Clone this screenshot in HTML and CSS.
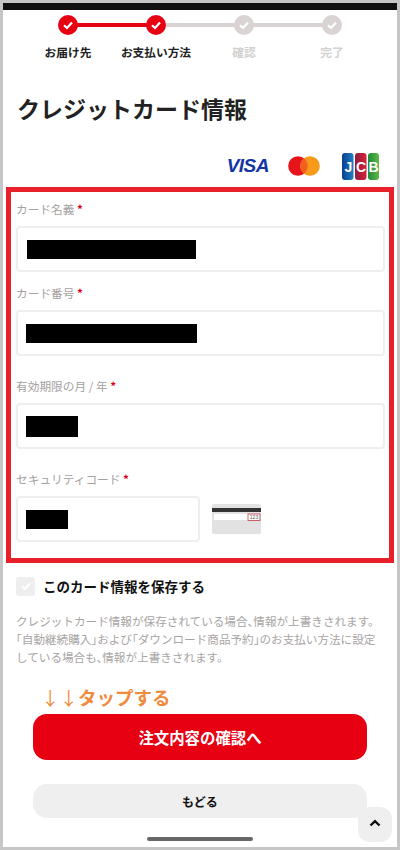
FILE: index.html
```html
<!DOCTYPE html>
<html lang="ja">
<head>
<meta charset="utf-8">
<title>クレジットカード情報</title>
<link rel="stylesheet" href="styles.css">
</head>
<body>
<div class="frame">
  <div class="topbar"></div>
  <ol class="stepper">
    <li class="step done"><span class="dot"><svg viewBox="0 0 12 12" width="12" height="12"><path d="M2 6.2 5 9 10 3.4" fill="none" stroke="#fff" stroke-width="2.2"/></svg></span><span class="step-label">お届け先</span></li>
    <li class="step done"><span class="dot"><svg viewBox="0 0 12 12" width="12" height="12"><path d="M2 6.2 5 9 10 3.4" fill="none" stroke="#fff" stroke-width="2.2"/></svg></span><span class="step-label">お支払い方法</span></li>
    <li class="step"><span class="dot"><svg viewBox="0 0 12 12" width="12" height="12"><path d="M2 6.2 5 9 10 3.4" fill="none" stroke="#fff" stroke-width="2.2"/></svg></span><span class="step-label">確認</span></li>
    <li class="step"><span class="dot"><svg viewBox="0 0 12 12" width="12" height="12"><path d="M2 6.2 5 9 10 3.4" fill="none" stroke="#fff" stroke-width="2.2"/></svg></span><span class="step-label">完了</span></li>
  </ol>
  <h1 class="title">クレジットカード情報</h1>
  <div class="brands">
    <span class="visa">VISA</span>
    <svg class="mc" viewBox="0 0 32 20" width="32" height="20"><circle cx="10" cy="10" r="9.8" fill="#e8141c"/><circle cx="22" cy="10" r="9.8" fill="#f79a1a"/><path d="M16 2.3a9.8 9.8 0 0 1 0 15.4 9.8 9.8 0 0 1 0-15.4z" fill="#f2601f"/></svg>
    <svg class="jcb" viewBox="0 0 37 27" width="37" height="27">
      <defs>
        <linearGradient id="jb" x1="0" x2="1" y1="0" y2="0"><stop offset="0" stop-color="#0a3f8f"/><stop offset="1" stop-color="#1f7fc4"/></linearGradient>
        <linearGradient id="jr" x1="0" x2="1" y1="0" y2="0"><stop offset="0" stop-color="#8f1c3c"/><stop offset="1" stop-color="#d8203c"/></linearGradient>
        <linearGradient id="jg" x1="0" x2="1" y1="0" y2="0"><stop offset="0" stop-color="#1c8a3c"/><stop offset="1" stop-color="#62b846"/></linearGradient>
      </defs>
      <rect x="0" y="0" width="11.5" height="27" rx="3" fill="url(#jb)"/>
      <rect x="13" y="0" width="11.5" height="27" rx="3" fill="url(#jr)"/>
      <rect x="26" y="0" width="11" height="27" rx="3" fill="url(#jg)"/>
      <text x="2.5 14 26.5" y="19" class="jcb-text">JCB</text>
    </svg>
  </div>
  <form class="card-form">
    <div class="field">
      <label class="field-label">カード名義 <em>*</em></label>
      <div class="input"><span class="mask mask-name"></span></div>
    </div>
    <div class="field">
      <label class="field-label">カード番号 <em>*</em></label>
      <div class="input"><span class="mask mask-number"></span></div>
    </div>
    <div class="field field-wide">
      <label class="field-label">有効期限の月 / 年 <em>*</em></label>
      <div class="input"><span class="mask mask-date"></span></div>
    </div>
    <div class="field field-wide">
      <label class="field-label">セキュリティコード <em>*</em></label>
      <div class="cvv-row">
        <div class="input input-cvv"><span class="mask mask-cvv"></span></div>
        <svg class="cvv-card" viewBox="0 0 49 30" width="49" height="30">
          <rect width="49" height="30" rx="2" fill="#e2e2e2"/>
          <rect y="4" width="49" height="4" fill="#333"/>
          <rect x="2" y="10" width="35" height="6" fill="#fff"/>
          <rect x="36" y="10" width="12" height="6.5" fill="#fff" stroke="#c2384a" stroke-width="0.8"/>
          <text x="42" y="15.4" text-anchor="middle" class="cvv-text">123</text>
        </svg>
      </div>
    </div>
  </form>
  <div class="save">
    <span class="checkbox"><svg viewBox="0 0 12 12" width="12" height="12"><path d="M2 6.2 5 9 10 3.4" fill="none" stroke="#fff" stroke-width="2"/></svg></span>
    <span class="save-label">このカード情報を保存する</span>
  </div>
  <p class="note">クレジットカード情報が保存されている場合、情報が上書きされます。<br>「自動継続購入」および「ダウンロード商品予約」のお支払い方法に設定している場合も、情報が上書きされます。</p>
  <div class="tap-hint"><span class="arrows">↓↓</span>タップする</div>
  <button class="btn btn-primary" type="button">注文内容の確認へ</button>
  <button class="btn btn-back" type="button">もどる</button>
  <button class="to-top" type="button" aria-label="ページ上部へ"><svg viewBox="0 0 12 8" width="12" height="8"><path d="M1.5 6.5 6 2.2 10.5 6.5" fill="none" stroke="#111" stroke-width="2.4"/></svg></button>
  <div class="home-bar"></div>
</div>
</body>
</html>
```
FILE: styles.css
```css
* { box-sizing: border-box; }
html, body { margin: 0; padding: 0; }
body {
  width: 400px;
  height: 850px;
  overflow: hidden;
  background: #fff;
  color: #222;
  font-family: "Noto Sans CJK JP", "Noto Sans", sans-serif;
}
.frame {
  position: relative;
  width: 400px;
  height: 850px;
  border: 3px solid #c6c6c6;
  background: #fff;
  overflow: hidden;
}
.topbar { height: 7px; background: #111; }

.stepper {
  list-style: none;
  margin: 0;
  padding: 5px 0 0 21px;
  display: flex;
}
.step {
  position: relative;
  width: 88px;
  display: flex;
  flex-direction: column;
  align-items: center;
  color: #d3d0d0;
}
.step.done { color: #222; }
.step::after {
  content: "";
  position: absolute;
  top: 8px;
  left: 44px;
  width: 88px;
  height: 4px;
  background: #d9d3d3;
}
.step:first-child::after { background: #e60012; }
.step:last-child::after { display: none; }
.dot {
  position: relative;
  z-index: 1;
  width: 20px;
  height: 20px;
  border-radius: 50%;
  background: #d9d3d3;
  display: flex;
  align-items: center;
  justify-content: center;
}
.step.done .dot { background: #e60012; }
.step-label {
  margin-top: 8px;
  font-size: 11.7px;
  line-height: 18px;
  font-weight: 700;
  white-space: nowrap;
}

.title {
  margin: 29px 0 0 14px;
  font-size: 23px;
  line-height: 36px;
  font-weight: 700;
  color: #222;
}
.brands {
  margin-top: 26px;
  padding-right: 18px;
  height: 28px;
  display: flex;
  align-items: center;
  justify-content: flex-end;
}
.visa {
  font-family: "Liberation Sans", sans-serif;
  font-size: 19px;
  font-weight: 700;
  font-style: italic;
  color: #1434a4;
  letter-spacing: -0.5px;
  margin-right: 19px;
}
.mc { margin-right: 22px; }
.jcb-text {
  font-family: "Liberation Sans", sans-serif;
  font-size: 14px;
  font-weight: 700;
  fill: #fff;
}

.card-form {
  margin: 7px 3px 0;
  height: 376px;
  border: 5px solid #e8202a;
  padding: 0 5px;
}
.field { margin-top: 8px; }
.field + .field { margin-top: 12px; }
.field-wide + .field-wide, .field + .field-wide { margin-top: 21px; }
.field-label {
  display: block;
  font-size: 11.7px;
  line-height: 18px;
  color: #a5a1a1;
}
.field-label em {
  font-style: normal;
  font-weight: 700;
  color: #e60012;
}
.input {
  margin-top: 8px;
  height: 46px;
  width: 369px;
  border: 2px solid #eeeeee;
  border-radius: 4px;
  background: #fff;
  display: flex;
  align-items: center;
  padding-left: 9px;
}
.mask { display: block; height: 19px; background: #000; }
.mask-name { width: 169px; }
.mask-number { width: 171px; margin-left: -1px; }
.mask-date { width: 52px; height: 21px; margin-left: -1px; }
.mask-cvv { width: 42px; margin-left: -1px; }
.cvv-row {
  display: flex;
  align-items: center;
  gap: 12px;
  margin-top: 8px;
}
.input-cvv { width: 184px; margin-top: 0; }
.cvv-text {
  font-family: "Liberation Sans", sans-serif;
  font-size: 5px;
  fill: #555;
}

.save {
  margin: 13px 0 0 13px;
  display: flex;
  align-items: center;
  gap: 8px;
}
.checkbox {
  width: 19px;
  height: 19px;
  border-radius: 3px;
  background: #eeeeee;
  display: flex;
  align-items: center;
  justify-content: center;
}
.save-label {
  font-size: 13.5px;
  line-height: 20px;
  font-weight: 700;
  color: #111;
}
.note {
  margin: 16px 0 0 13px;
  width: 368px;
  font-size: 11.6px;
  line-height: 18px;
  color: #a8a4a4;
  font-feature-settings: "halt";
}
.tap-hint {
  margin: 18px 0 0 38px;
  font-size: 18.5px;
  line-height: 26px;
  font-weight: 700;
  color: #f08a3c;
}
.arrows { font-weight: 400; }
.btn {
  display: block;
  width: 334px;
  margin-left: 30px;
  border: 0;
  font-family: inherit;
  font-weight: 700;
  text-align: center;
}
.btn-primary {
  margin-top: 4px;
  height: 46px;
  border-radius: 14px;
  background: #e60012;
  color: #fff;
  font-size: 15.4px;
}
.btn-back {
  margin-top: 24px;
  height: 34px;
  border-radius: 14px;
  background: #efefef;
  color: #111;
  font-size: 12px;
}
.to-top {
  position: absolute;
  left: 355px;
  top: 804px;
  width: 34px;
  height: 35px;
  border: 0;
  border-radius: 12px;
  background: #efefef;
  display: flex;
  align-items: center;
  justify-content: center;
  padding: 0 0 4px;
}
.home-bar {
  position: absolute;
  left: 144px;
  top: 834px;
  width: 106px;
  height: 3.5px;
  border-radius: 2px;
  background: #666;
}
```
